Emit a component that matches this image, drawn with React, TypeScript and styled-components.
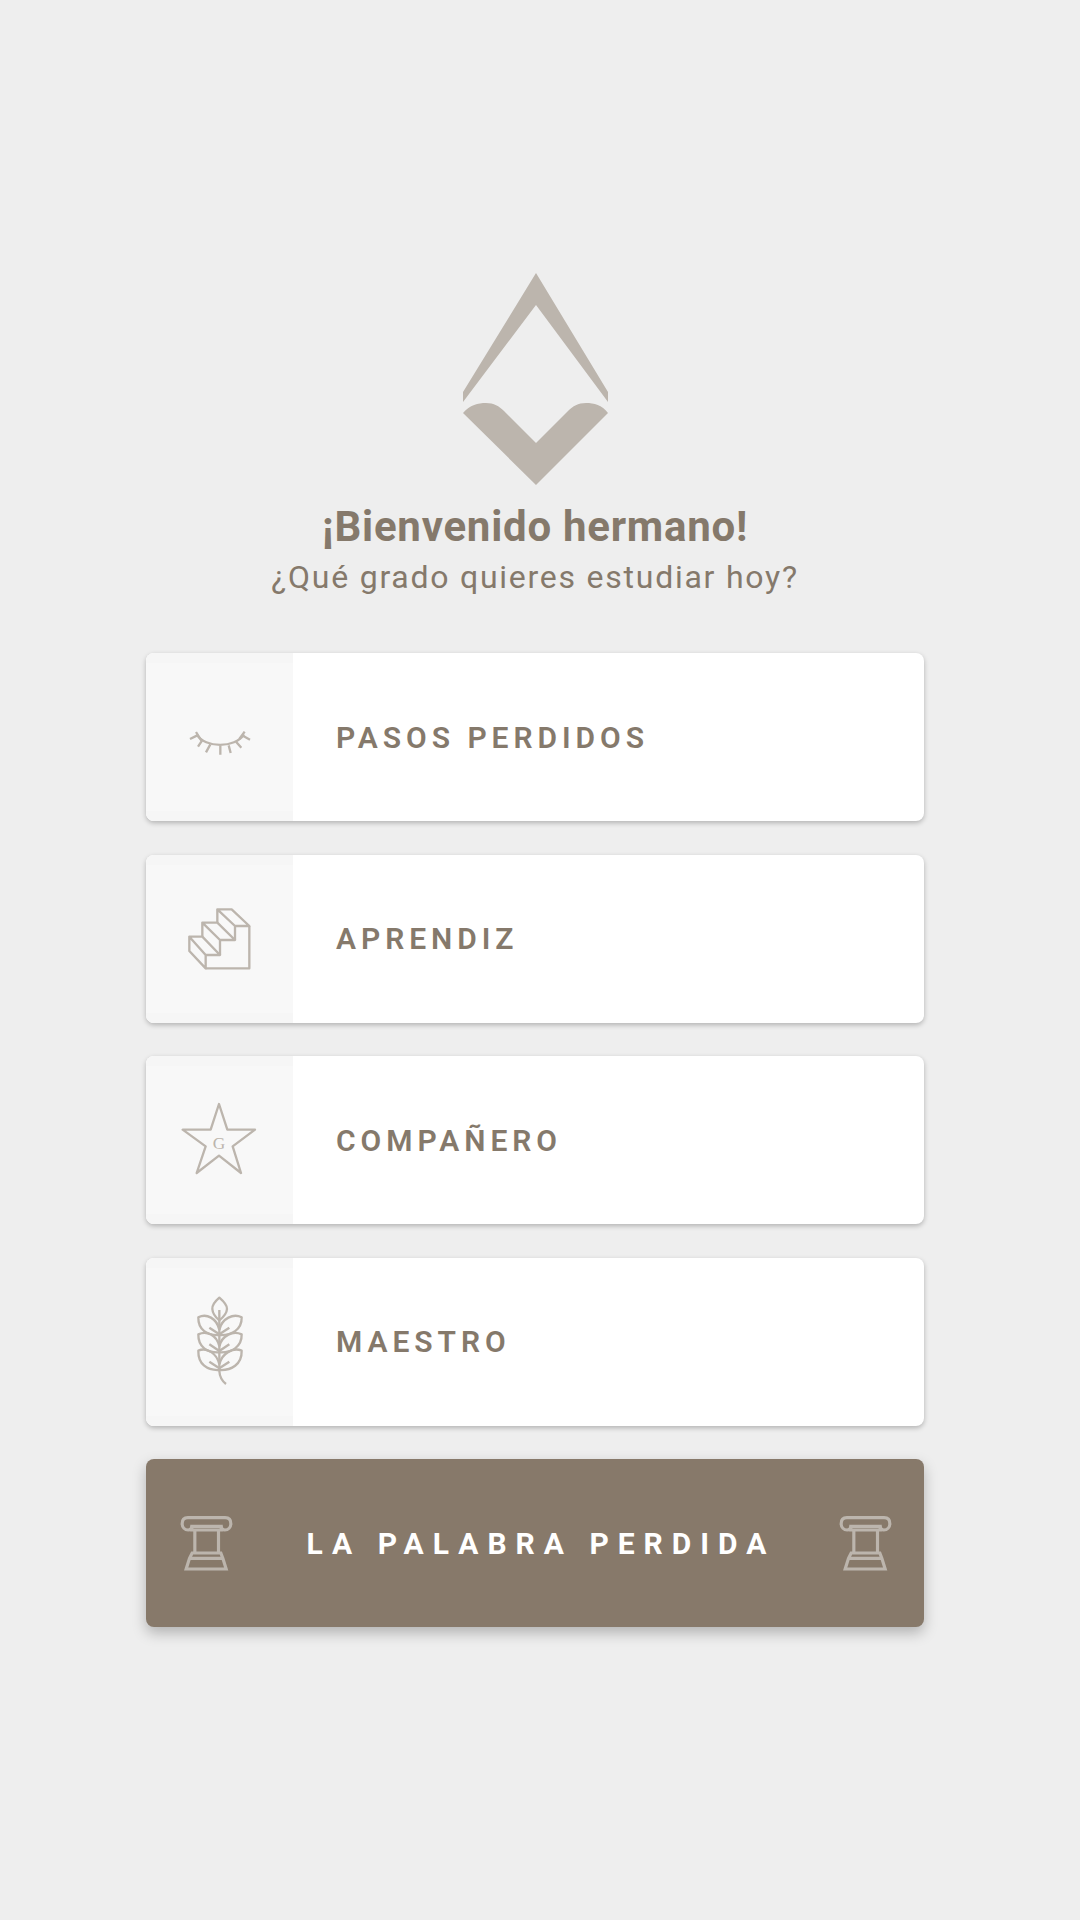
import React from "react";
import styled, { createGlobalStyle } from "styled-components";

const GlobalStyle = createGlobalStyle`
  html, body {
    margin: 0;
    padding: 0;
    background: #eeeeee;
  }
  * {
    box-sizing: border-box;
  }
`

const Logo = () => (
    <LogoSvg viewBox="463 273 146 213">
        <path d="M536 273 L608 392 V402 L536 305 L463 402 V392 Z"/>
        <path d="M463 413 C470 405 478 403 486 403 C494 403 499 406 504 411 L536 443 L568 411 C573 406 578 403 586 403 C594 403 602 405 608 413 L536 485 Z"/>
    </LogoSvg>
)

const EyeIcon = () => (
    <IconSvg viewBox="18 39 441 504">
        <path d="M170 283 C195 325 285 325 312 283"/>
        <path d="M150 297 L172 286 M168 276 L186 305 M174 320 L186 302 M198 337 L211 313 M241 344 V318 M272 339 L266 316 M304 323 L288 305 M330 299 L306 286 M314 275 L298 297"/>
    </IconSvg>
)

const StairsIcon = () => (
    <IconSvg viewBox="-42 -75 441 504">
        <path d="M172 88 H215 L268 138 H225 Z M172 88 V128 M225 138 V180"/>
        <path d="M127 128 H172 L225 180 H180 Z M127 128 V170 M180 180 V225"/>
        <path d="M88 170 H127 L180 225 H137 Z M88 170 V213 L137 265 V225"/>
        <path d="M137 265 H268 V138"/>
    </IconSvg>
)

const StarIcon = () => (
    <IconSvg viewBox="-42 -99 441 504">
        <path d="M177 45 L202 122 H285 L218 172 L243 252 L177 200 L110 252 L137 172 L68 122 H152 Z"/>
        <StarLetter x="177" y="180" textAnchor="middle">G</StarLetter>
    </IconSvg>
)

const WheatIcon = () => (
    <IconSvg viewBox="-72 -81 441 504">
        <path d="M148 38 C134 50 126 60 127 72 C128 88 138 98 148 106 C158 98 170 88 171 72 C172 60 162 50 148 38 Z"/>
        <path d="M148 75 V258 C149 275 156 288 168 297"/>
        <path d="M148 150 C112 152 84 135 85 97 C110 84 140 100 148 134"/>
        <path d="M148 150 C184 152 216 135 215 97 C190 84 156 100 148 134"/>
        <path d="M148 202 C112 204 84 186 85 148 C110 136 140 150 148 184"/>
        <path d="M148 202 C184 204 216 186 215 148 C190 136 156 150 148 184"/>
        <path d="M148 255 C112 257 84 238 85 197 C110 186 140 204 148 238"/>
        <path d="M148 255 C184 257 216 238 215 197 C190 186 156 204 148 238"/>
        <path d="M118 128 L148 148 M178 128 L148 148 M118 178 L148 198 M178 178 L148 198 M118 230 L148 250 M178 230 L148 250"/>
    </IconSvg>
)

const PillarIcon = () => (
    <PillarSvg viewBox="122 228 158 168">
        <path d="M145 236 H257 C268 236 274 243 274 254 C274 265 266 273 256 273 C249 273 245 269 245 262 H157 C157 269 153 273 146 273 C136 273 128 265 128 254 C128 243 134 236 145 236 Z"/>
        <path d="M157 262 V273 H245 V262 M166 273 V342 M237 273 V342"/>
        <path d="M158 342 H244 L250 358 L260 390 H140 L150 358 Z M150 358 H250"/>
    </PillarSvg>
)

type GradeType = {
    title: string
    icon: React.ReactNode
}

const grades: GradeType[] = [
    {title: "PASOS PERDIDOS", icon: <EyeIcon/>},
    {title: "APRENDIZ", icon: <StairsIcon/>},
    {title: "COMPAÑERO", icon: <StarIcon/>},
    {title: "MAESTRO", icon: <WheatIcon/>},
]

export default function App() {
    return (
        <Page>
            <GlobalStyle/>
            <Logo/>
            <Title>¡Bienvenido hermano!</Title>
            <Subtitle>¿Qué grado quieres estudiar hoy?</Subtitle>
            <Menu>
                {grades.map((grade) => (
                    <GradeCard key={grade.title}>
                        <IconCell>{grade.icon}</IconCell>
                        <GradeTitle>{grade.title}</GradeTitle>
                    </GradeCard>
                ))}
                <WordButton>
                    <PillarIcon/>
                    <WordLabel>LA PALABRA PERDIDA</WordLabel>
                    <PillarIcon/>
                </WordButton>
            </Menu>
        </Page>
    );
}

const Page = styled.div`
  width: 1080px;
  height: 1920px;
  overflow: hidden;
  background: #eeeeee;
  padding: 273px 10px 0 0;
  display: flex;
  flex-direction: column;
  align-items: center;
  font-family: Roboto, "Liberation Sans", sans-serif;
  color: #85796b;
`

const LogoSvg = styled.svg`
  width: 146px;
  height: 213px;
  margin-left: 2px;
  fill: #bcb5ad;
`

const Title = styled.h1`
  margin: 17px 0 0;
  font-size: 42px;
  line-height: 48px;
  font-weight: 700;
  letter-spacing: 0.75px;
`

const Subtitle = styled.p`
  margin: 2px 0 0;
  font-size: 32px;
  line-height: 48px;
  font-weight: 400;
  letter-spacing: 1.75px;
`

const Menu = styled.div`
  width: 778px;
  margin-top: 52px;
  display: flex;
  flex-direction: column;
  gap: 33.6px;
`

const GradeCard = styled.div`
  height: 168px;
  display: flex;
  align-items: stretch;
  background: #ffffff;
  border-radius: 8px;
  overflow: hidden;
  box-shadow: 0 2px 5px rgba(0, 0, 0, 0.25);
`

const IconCell = styled.div`
  width: 147px;
  flex: none;
  background: #f8f8f8;
  box-shadow: inset 0 10px 0 0 #f6f6f6, inset 0 -10px 0 0 #f6f6f6;
`

const IconSvg = styled.svg`
  display: block;
  width: 147px;
  height: 168px;
  fill: none;
  stroke: #bcb5ad;
  stroke-width: 7;
  stroke-linejoin: round;
`

const StarLetter = styled.text`
  font-family: "Liberation Serif", serif;
  font-size: 52px;
  fill: #bcb5ad;
  stroke: none;
`

const GradeTitle = styled.span`
  margin-left: 43px;
  align-self: center;
  font-size: 30px;
  font-weight: 600;
  letter-spacing: 4.95px;
`

const WordButton = styled.div`
  height: 168px;
  padding: 0 32px 0 34px;
  display: flex;
  align-items: center;
  justify-content: space-between;
  background: #87796a;
  border-radius: 8px;
  box-shadow: 0 6px 14px rgba(0, 0, 0, 0.25);
`

const PillarSvg = styled.svg`
  width: 53px;
  height: 56px;
  fill: none;
  stroke: #bcb5ad;
  stroke-width: 9.5;
`

const WordLabel = styled.span`
  margin-left: 10px;
  font-size: 30px;
  font-weight: 700;
  letter-spacing: 9px;
  color: #ffffff;
`
